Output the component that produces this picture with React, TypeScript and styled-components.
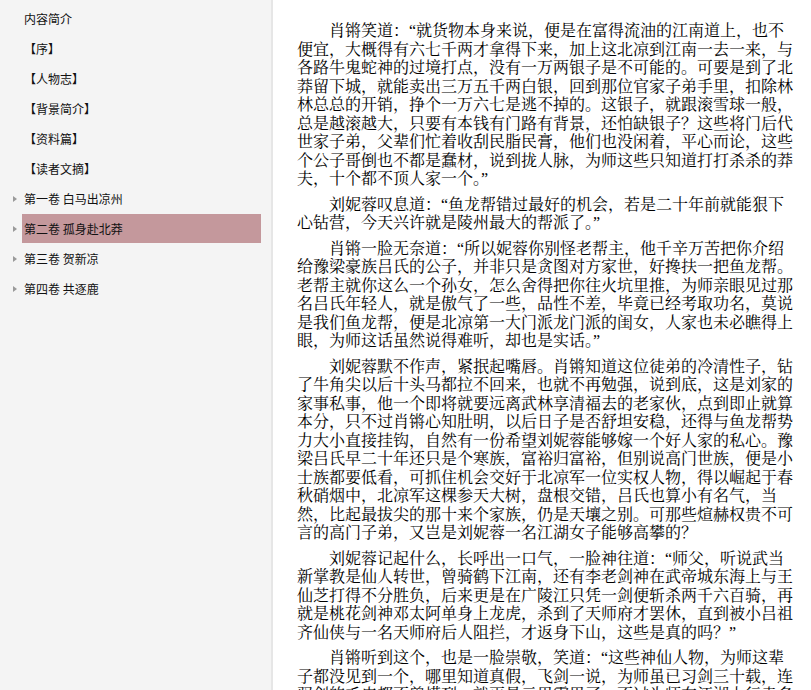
import React from "react";
import styled, { createGlobalStyle } from "styled-components";

const Global = createGlobalStyle`
  html, body { margin: 0; padding: 0; height: 100%; overflow: hidden; background: #fff; }
  #root { height: 100%; }
  * { box-sizing: border-box; }
`;

const Shell = styled.div`
  display: flex;
  height: 100vh;
  overflow: hidden;
`;

const Sidebar = styled.nav`
  flex: none;
  width: 273px;
  height: 100%;
  background: #f4f4f4;
  border-right: 2px solid #e6e6e6;
  padding: 4px 10px 0 10px;
  font-family: "Noto Sans CJK SC", "Noto Sans", sans-serif;
  font-size: 12px;
  color: #111;
`;

const TreeList = styled.ul`
  list-style: none;
  margin: 0;
  padding: 0;
  display: flex;
  flex-direction: column;
  gap: 1px;
`;

const Row = styled.li`
  display: flex;
  align-items: stretch;
  height: 29px;
`;

const Toggle = styled.span`
  flex: none;
  width: 12px;
  display: flex;
  align-items: center;
  padding-left: 3px;
`;

const Caret = styled.span`
  width: 0;
  height: 0;
  border-top: 3.5px solid transparent;
  border-bottom: 3.5px solid transparent;
  border-left: 4.5px solid #9a9a9a;
`;

const Label = styled.span<{ $active?: boolean }>`
  flex: 1;
  display: flex;
  align-items: center;
  padding-left: 2px;
  white-space: nowrap;
  background: ${(p) => (p.$active ? "#c4989c" : "transparent")};
`;

const Reader = styled.main`
  flex: 1;
  height: 100%;
  overflow: hidden;
  background: #fff;
  padding: 22px 18px 0 24px;
  font-family: "Liberation Serif", "Noto Serif CJK SC", "Source Han Serif SC", "AR PL UMing CN", "Noto Sans CJK SC", serif;
  font-size: 16px;
  color: #000;
`;

const Para = styled.p`
  margin: 0 0 7px;
  text-indent: 2em;
  line-height: 18.5px;
  text-align: left;
`;

type Item = { title: string; expandable?: boolean; active?: boolean };

const items: Item[] = [
  { title: "内容简介" },
  { title: "【序】" },
  { title: "【人物志】" },
  { title: "【背景简介】" },
  { title: "【资料篇】" },
  { title: "【读者文摘】" },
  { title: "第一卷 白马出凉州", expandable: true },
  { title: "第二卷 孤身赴北莽", expandable: true, active: true },
  { title: "第三卷 贺新凉", expandable: true },
  { title: "第四卷 共逐鹿", expandable: true },
];

const paragraphs = [
  "肖锵笑道：“就货物本身来说，便是在富得流油的江南道上，也不便宜，大概得有六七千两才拿得下来，加上这北凉到江南一去一来，与各路牛鬼蛇神的过境打点，没有一万两银子是不可能的。可要是到了北莽留下城，就能卖出三万五千两白银，回到那位官家子弟手里，扣除林林总总的开销，挣个一万六七是逃不掉的。这银子，就跟滚雪球一般，总是越滚越大，只要有本钱有门路有背景，还怕缺银子？这些将门后代世家子弟，父辈们忙着收刮民脂民膏，他们也没闲着，平心而论，这些个公子哥倒也不都是蠢材，说到拢人脉，为师这些只知道打打杀杀的莽夫，十个都不顶人家一个。”",
  "刘妮蓉叹息道：“鱼龙帮错过最好的机会，若是二十年前就能狠下心钻营，今天兴许就是陵州最大的帮派了。”",
  "肖锵一脸无奈道：“所以妮蓉你别怪老帮主，他千辛万苦把你介绍给豫梁豪族吕氏的公子，并非只是贪图对方家世，好搀扶一把鱼龙帮。老帮主就你这么一个孙女，怎么舍得把你往火坑里推，为师亲眼见过那名吕氏年轻人，就是傲气了一些，品性不差，毕竟已经考取功名，莫说是我们鱼龙帮，便是北凉第一大门派龙门派的闺女，人家也未必瞧得上眼，为师这话虽然说得难听，却也是实话。”",
  "刘妮蓉默不作声，紧抿起嘴唇。肖锵知道这位徒弟的冷清性子，钻了牛角尖以后十头马都拉不回来，也就不再勉强，说到底，这是刘家的家事私事，他一个即将就要远离武林享清福去的老家伙，点到即止就算本分，只不过肖锵心知肚明，以后日子是否舒坦安稳，还得与鱼龙帮势力大小直接挂钩，自然有一份希望刘妮蓉能够嫁一个好人家的私心。豫梁吕氏早二十年还只是个寒族，富裕归富裕，但别说高门世族，便是小士族都要低看，可抓住机会交好于北凉军一位实权人物，得以崛起于春秋硝烟中，北凉军这棵参天大树，盘根交错，吕氏也算小有名气，当然，比起最拔尖的那十来个家族，仍是天壤之别。可那些煊赫权贵不可言的高门子弟，又岂是刘妮蓉一名江湖女子能够高攀的？",
  "刘妮蓉记起什么，长呼出一口气，一脸神往道：“师父，听说武当新掌教是仙人转世，曾骑鹤下江南，还有李老剑神在武帝城东海上与王仙芝打得不分胜负，后来更是在广陵江只凭一剑便斩杀两千六百骑，再就是桃花剑神邓太阿单身上龙虎，杀到了天师府才罢休，直到被小吕祖齐仙侠与一名天师府后人阻拦，才返身下山，这些是真的吗？”",
  "肖锵听到这个，也是一脸崇敬，笑道：“这些神仙人物，为师这辈子都没见到一个，哪里知道真假，飞剑一说，为师虽已习剑三十载，连驭剑的毛皮都不曾摸到，就更是云里雾里了，不过为师在江湖上行走多年，倒也听说过一些传闻。”",
];

export default function App() {
  return (
    <>
      <Global />
      <Shell>
        <Sidebar>
          <TreeList>
            {items.map((it) => (
              <Row key={it.title}>
                <Toggle>{it.expandable && <Caret />}</Toggle>
                <Label $active={it.active}>{it.title}</Label>
              </Row>
            ))}
          </TreeList>
        </Sidebar>
        <Reader>
          {paragraphs.map((p, i) => (
            <Para key={i}>{p}</Para>
          ))}
        </Reader>
      </Shell>
    </>
  );
}
